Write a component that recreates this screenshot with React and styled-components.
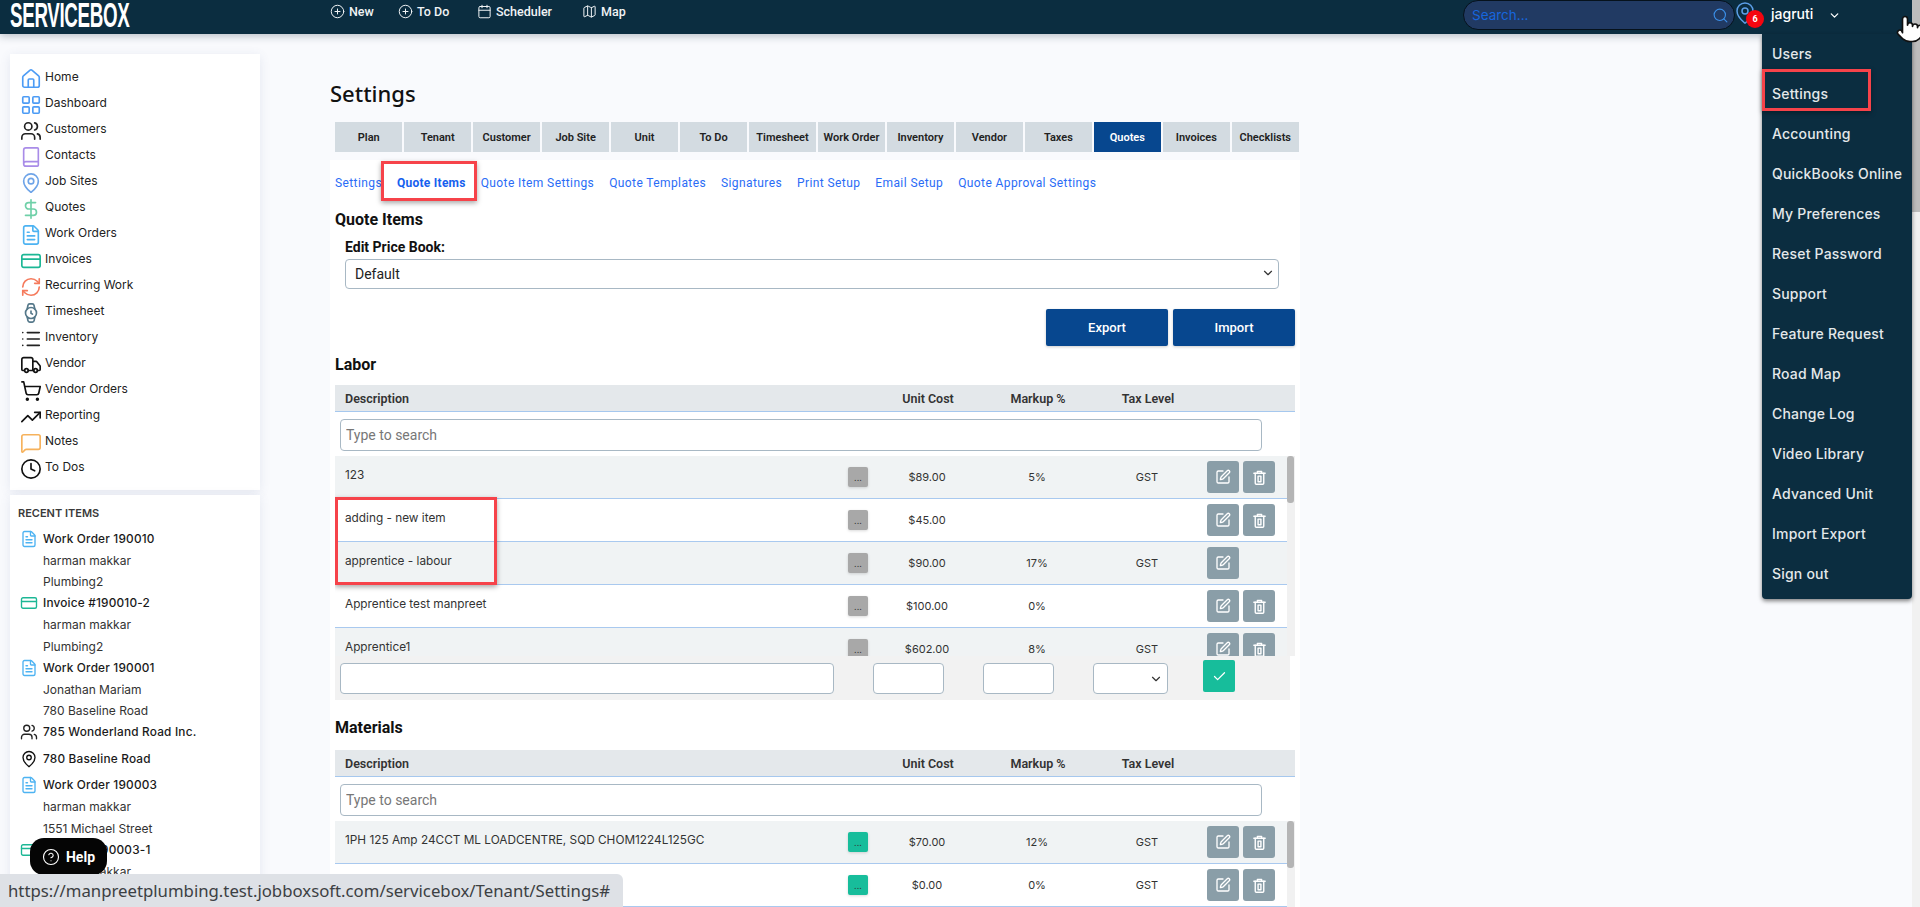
import React from 'react';
import styled, { createGlobalStyle } from 'styled-components';
import {
  Home, LayoutGrid, Users, Book, MapPin, DollarSign, FileText, CreditCard, RefreshCw, Watch,
  List, Truck, ShoppingCart, TrendingUp, MessageSquare, Clock, PlusCircle, Calendar, Map as MapIcon,
  Search, ChevronDown, Edit, Check, HelpCircle,
} from 'lucide-react';

const GlobalStyle = createGlobalStyle`
  html, body { margin: 0; padding: 0; height: 100%; overflow: hidden; background: #f9fafd; }
  * { box-sizing: border-box; }
  body { font-family: Roboto, "Liberation Sans", sans-serif; }
`;

const sideLinks = [
  ['Home', Home, '#4d9cf5'],
  ['Dashboard', LayoutGrid, '#4d9cf5'],
  ['Customers', Users, '#222'],
  ['Contacts', Book, '#a98ce8'],
  ['Job Sites', MapPin, '#6ea4e8'],
  ['Quotes', DollarSign, '#6fd0a8'],
  ['Work Orders', FileText, '#4db3f2'],
  ['Invoices', CreditCard, '#1cb795'],
  ['Recurring Work', RefreshCw, '#f57a5c'],
  ['Timesheet', Watch, '#55788a'],
  ['Inventory', List, '#222'],
  ['Vendor', Truck, '#111'],
  ['Vendor Orders', ShoppingCart, '#111'],
  ['Reporting', TrendingUp, '#111'],
  ['Notes', MessageSquare, '#f6b25c'],
  ['To Dos', Clock, '#111'],
];

const recent = [
  ['Work Order 190010', FileText, '#4db3f2', ['harman makkar', 'Plumbing2']],
  ['Invoice #190010-2', CreditCard, '#1cb795', ['harman makkar', 'Plumbing2']],
  ['Work Order 190001', FileText, '#4db3f2', ['Jonathan Mariam', '780 Baseline Road']],
  ['785 Wonderland Road Inc.', Users, '#222', []],
  ['780 Baseline Road', MapPin, '#111', []],
  ['Work Order 190003', FileText, '#4db3f2', ['harman makkar', '1551 Michael Street']],
  ['Invoice #190003-1', CreditCard, '#1cb795', ['harman makkar']],
];

const tabs = ['Plan', 'Tenant', 'Customer', 'Job Site', 'Unit', 'To Do', 'Timesheet', 'Work Order', 'Inventory', 'Vendor', 'Taxes', 'Quotes', 'Invoices', 'Checklists'];
const subLinks = ['Settings', 'Quote Items', 'Quote Item Settings', 'Quote Templates', 'Signatures', 'Print Setup', 'Email Setup', 'Quote Approval Settings'];
const menuItems = ['Users', 'Settings', 'Accounting', 'QuickBooks Online', 'My Preferences', 'Reset Password', 'Support', 'Feature Request', 'Road Map', 'Change Log', 'Video Library', 'Advanced Unit', 'Import Export', 'Sign out'];

const laborRows = [
  { name: '123', cost: '$89.00', markup: '5%', tax: 'GST', del: true },
  { name: 'adding - new item', cost: '$45.00', markup: '', tax: '', del: true },
  { name: 'apprentice - labour', cost: '$90.00', markup: '17%', tax: 'GST', del: false },
  { name: 'Apprentice test manpreet', cost: '$100.00', markup: '0%', tax: '', del: true },
  { name: 'Apprentice1', cost: '$602.00', markup: '8%', tax: 'GST', del: true },
];

const materialRows = [
  { name: '1PH 125 Amp 24CCT ML LOADCENTRE, SQD CHOM1224L125GC', cost: '$70.00', markup: '12%', tax: 'GST', del: true },
  { name: '', cost: '$0.00', markup: '0%', tax: 'GST', del: true },
];

// bin with the boxed inner panel, lucide's bins only have two lines
const BinIcon = () => (
  <svg width="17" height="17" viewBox="0 0 24 24" fill="none" stroke="currentColor" strokeWidth="2" strokeLinecap="round" strokeLinejoin="round">
    <path d="M4 6h16" />
    <path d="M9 6V3.5h6V6" />
    <path d="M6 6v14a1.5 1.5 0 0 0 1.5 1.5h9A1.5 1.5 0 0 0 18 20V6" />
    <rect x="10" y="10" width="4" height="8" />
  </svg>
);

const ItemTable = ({ rows, teal, height, children }) => (
  <>
    <TableHead>
      <HeadDesc>Description</HeadDesc>
      <NumCell>Unit Cost</NumCell>
      <NumCell>Markup %</NumCell>
      <NumCell>Tax Level</NumCell>
    </TableHead>
    <SearchRow>
      <TextField placeholder="Type to search" />
    </SearchRow>
    <RowsBox $height={height}>
      <RowsList>
        {rows.map((row, index) => (
          <Row key={index} $odd={index % 2 === 0}>
            <RowName>{row.name}</RowName>
            <DotsButton $teal={teal}>...</DotsButton>
            <ValueCell>{row.cost}</ValueCell>
            <ValueCell>{row.markup}</ValueCell>
            <ValueCell>{row.tax}</ValueCell>
            <Actions>
              <ActionButton><Edit size={16} strokeWidth={2} /></ActionButton>
              {row.del && <ActionButton><BinIcon /></ActionButton>}
            </Actions>
          </Row>
        ))}
      </RowsList>
      <RowsScroll><RowsThumb /></RowsScroll>
      {children}
    </RowsBox>
  </>
);

const App = () => (
  <>
    <GlobalStyle />
    <Page>
      <TopBar>
        <Logo><LogoText>SERVICEBOX</LogoText></Logo>
        <TopNav>
          <TopLink $width={68}><PlusCircle size={15} strokeWidth={1.6} />New</TopLink>
          <TopLink $width={79}><PlusCircle size={15} strokeWidth={1.6} />To Do</TopLink>
          <TopLink $width={105}><Calendar size={15} strokeWidth={1.6} />Scheduler</TopLink>
          <TopLink $width={60}><MapIcon size={15} strokeWidth={1.6} />Map</TopLink>
        </TopNav>
        <TopRight>
          <SearchPill>
            <SearchText>Search...</SearchText>
            <Search size={17} strokeWidth={1.6} color="#3b8fe8" />
          </SearchPill>
          <PinWrap>
            <MapPin size={24} strokeWidth={1.5} color="#5c9fe8" />
            <Badge>6</Badge>
          </PinWrap>
          <UserName>jagruti</UserName>
          <ChevronDown size={13} strokeWidth={2.4} color="#fff" />
        </TopRight>
      </TopBar>
      <Body>
        <Sidebar>
          <SideCard>
            {sideLinks.map(([label, Icon, color]) => (
              <SideLink key={label}>
                <Icon size={22} strokeWidth={1.8} color={color} />
                <span>{label}</span>
              </SideLink>
            ))}
          </SideCard>
          <RecentCard>
            <RecentTitle>RECENT ITEMS</RecentTitle>
            {recent.map(([label, Icon, color, subs]) => (
              <RecentGroup key={label} $spaced={subs.length === 0}>
                <RecentHead>
                  <IconSlot><Icon size={18} strokeWidth={1.8} color={color} /></IconSlot>
                  {label}
                </RecentHead>
                {subs.map((sub, i) => <RecentSub key={i}>{sub}</RecentSub>)}
              </RecentGroup>
            ))}
          </RecentCard>
        </Sidebar>
        <Content>
          <PageTitle>Settings</PageTitle>
          <Tabs>
            {tabs.map((tab) => <Tab key={tab} $active={tab === 'Quotes'}>{tab}</Tab>)}
          </Tabs>
          <Panel>
            <SubNav>
              {subLinks.map((link) => <SubLink key={link} $active={link === 'Quote Items'}>{link}</SubLink>)}
              <QuoteItemsMark />
            </SubNav>
            <SectionTitle>Quote Items</SectionTitle>
            <PriceBook>
              <FieldLabel>Edit Price Book:</FieldLabel>
              <SelectBox>
                Default
                <ChevronDown size={14} strokeWidth={2} color="#333" />
              </SelectBox>
            </PriceBook>
            <ButtonRow>
              <BlueButton>Export</BlueButton>
              <BlueButton>Import</BlueButton>
            </ButtonRow>
            <LaborTitle>Labor</LaborTitle>
            <ItemTable rows={laborRows} height={200}>
              <RowsMark />
            </ItemTable>
            <AddRow>
              <AddInput $width={494} />
              <AddInput $width={71} />
              <AddInput $width={71} />
              <AddSelect><ChevronDown size={14} strokeWidth={2} color="#333" /></AddSelect>
              <CheckButton><Check size={15} strokeWidth={2} /></CheckButton>
            </AddRow>
            <MaterialsTitle>Materials</MaterialsTitle>
            <ItemTable rows={materialRows} teal height={90} />
          </Panel>
        </Content>
      </Body>
      <PageScroll><PageThumb /></PageScroll>
      <UserMenu>
        {menuItems.map((item) => <MenuRow key={item}>{item}</MenuRow>)}
        <SettingsMark />
      </UserMenu>
      <Cursor viewBox="0 0 24 24" width="30" height="30">
        <path
          d="M8 2a2 2 0 0 1 2 2v5a2 2 0 0 1 4 0v1a2 2 0 0 1 4 0v1a2 2 0 0 1 4 0v3a8 8 0 0 1-8 8h-2c-2.8 0-4.5-.9-6-2.3l-3.6-3.6a2 2 0 0 1 2.8-2.8L6 15V4a2 2 0 0 1 2-2z"
          fill="#fff"
          stroke="#111"
          strokeWidth="1.3"
          strokeLinejoin="round"
        />
      </Cursor>
      <HelpButton><HelpCircle size={18} strokeWidth={1.5} />Help</HelpButton>
      <UrlBubble>https://manpreetplumbing.test.jobboxsoft.com/servicebox/Tenant/Settings#</UrlBubble>
    </Page>
  </>
);

export default App;

const Page = styled.div`
  position: relative;
  height: 907px;
  overflow: hidden;
  background: #f9fafd;
`;

const TopBar = styled.header`
  position: relative;
  z-index: 2;
  height: 34px;
  display: flex;
  align-items: flex-start;
  background: #0b2d40;
  box-shadow: 0 2px 8px rgba(30, 50, 70, 0.3);
  color: #fff;
`;

const Logo = styled.div`
  width: 330px;
  height: 34px;
  padding-left: 10px;
`;

const LogoText = styled.span`
  display: inline-block;
  font-family: "Liberation Sans", sans-serif;
  font-size: 35px;
  line-height: 29px;
  font-weight: 700;
  letter-spacing: -0.6px;
  transform: scaleX(0.536);
  transform-origin: left center;
`;

const TopNav = styled.nav`
  display: flex;
  height: 22px;
  align-items: center;
`;

const TopLink = styled.a`
  display: flex;
  align-items: center;
  gap: 4px;
  width: ${(p) => p.$width}px;
  font-size: 12.5px;
  font-weight: 500;
  color: #f0f3f5;
`;

const TopRight = styled.div`
  display: flex;
  align-items: center;
  position: absolute;
  left: 1463px;
  top: 0;
  height: 30px;
`;

const SearchPill = styled.div`
  width: 272px;
  height: 30px;
  display: flex;
  align-items: center;
  justify-content: space-between;
  padding: 0 5px 0 8px;
  background: #213a63;
  border: 1px solid #06121c;
  border-radius: 15px;
`;

const SearchText = styled.span`
  font-family: Inter, sans-serif;
  font-size: 13.5px;
  color: #1766dd;
`;

const PinWrap = styled.div`
  position: relative;
  width: 36px;
  height: 30px;
  padding-top: 1px;
  svg { margin-left: -2px; }
`;

const Badge = styled.span`
  position: absolute;
  left: 11px;
  top: 10px;
  width: 18px;
  height: 18px;
  border-radius: 50%;
  background: #f5050f;
  color: #fff;
  font-size: 9px;
  font-weight: 700;
  display: flex;
  align-items: center;
  justify-content: center;
`;

const UserName = styled.span`
  width: 57px;
  font-family: Inter, sans-serif;
  font-size: 14px;
  font-weight: 500;
  margin-top: -3px;
`;

const Body = styled.div`
  height: 873px;
  display: flex;
  align-items: flex-start;
`;

const Sidebar = styled.aside`
  width: 250px;
  margin: 20px 0 0 10px;
  flex: none;
  display: flex;
  flex-direction: column;
  gap: 5px;
`;

const SideCard = styled.div`
  height: 436px;
  padding: 10px 0 0 10px;
  background: #fff;
  box-shadow: 0 2px 10px rgba(80, 100, 150, 0.12);
`;

const SideLink = styled.a`
  height: 26px;
  display: flex;
  align-items: flex-start;
  gap: 3px;
  font-family: Inter, sans-serif;
  font-size: 12px;
  line-height: 26px;
  color: #222;
  svg { margin-top: 4px; flex: none; }
`;

const RecentCard = styled(SideCard)`
  height: 420px;
  padding: 10px 8px 0 8px;
`;

const RecentTitle = styled.div`
  height: 23px;
  font-family: Inter, sans-serif;
  font-size: 11px;
  line-height: 16px;
  font-weight: 600;
  color: #3a3a3a;
`;

const RecentGroup = styled.div`
  margin-bottom: ${(p) => (p.$spaced ? '5px' : '0')};
`;

const RecentHead = styled.div`
  height: 21.5px;
  display: flex;
  align-items: center;
  font-family: Inter, sans-serif;
  font-size: 11.8px;
  font-weight: 500;
  letter-spacing: 0.2px;
  color: #1a1a1a;
`;

const IconSlot = styled.span`
  width: 25px;
  flex: none;
  display: flex;
  justify-content: center;
  padding-right: 4px;
`;

const RecentSub = styled.div`
  height: 21.5px;
  padding-left: 25px;
  font-family: Inter, sans-serif;
  font-size: 12px;
  line-height: 22.5px;
  color: #333;
`;

const Content = styled.main`
  width: 970px;
  margin-left: 70px;
  flex: none;
`;

const PageTitle = styled.h1`
  height: 71px;
  margin: 0;
  padding-top: 46px;
  font-family: "Noto Sans", sans-serif;
  font-size: 22px;
  line-height: 26px;
  font-weight: 500;
  color: #111;
`;

const Tabs = styled.div`
  display: grid;
  grid-template-columns: repeat(14, 1fr);
  gap: 1.5px;
  width: 964px;
  height: 30px;
  margin: 17px 0 8px 5px;
`;

const Tab = styled.div`
  display: flex;
  align-items: center;
  justify-content: center;
  background: ${(p) => (p.$active ? '#07478f' : '#d3dbe1')};
  color: ${(p) => (p.$active ? '#fff' : '#222')};
  font-size: 11px;
  font-weight: 600;
  white-space: nowrap;
`;

const Panel = styled.section`
  height: 760px;
  padding: 0 5px;
  background: #fff;
`;

const SubNav = styled.nav`
  position: relative;
  height: 46px;
  display: flex;
  align-items: center;
  gap: 15px;
`;

const SubLink = styled.a`
  font-size: 12px;
  letter-spacing: ${(p) => (p.$active ? '0.25px' : '0.4px')};
  font-weight: ${(p) => (p.$active ? 700 : 400)};
  color: ${(p) => (p.$active ? '#1560ee' : '#2a6cf6')};
`;

const RedMark = styled.div`
  position: absolute;
  border: 3px solid #f6434a;
  box-shadow: 0 2px 5px rgba(0, 0, 0, 0.35);
  pointer-events: none;
`;

const QuoteItemsMark = styled(RedMark)`
  left: 46px;
  top: 1px;
  width: 96px;
  height: 40px;
`;

const SectionTitle = styled.h2`
  margin: 0;
  height: 26px;
  font-size: 16px;
  line-height: 28px;
  font-weight: 700;
  color: #111;
`;

const PriceBook = styled.div`
  padding: 0 16px 0 10px;
`;

const FieldLabel = styled.div`
  height: 27px;
  font-size: 14px;
  line-height: 31px;
  font-weight: 700;
  color: #111;
`;

const SelectBox = styled.div`
  height: 30px;
  display: flex;
  align-items: center;
  justify-content: space-between;
  padding: 0 3px 0 9px;
  border: 1px solid #a8b8c4;
  border-radius: 4px;
  font-size: 14px;
  color: #222;
  svg { margin-top: -2px; }
`;

const ButtonRow = styled.div`
  display: flex;
  justify-content: flex-end;
  gap: 5px;
  margin-top: 20px;
`;

const BlueButton = styled.button`
  width: 122px;
  height: 37px;
  border: 0;
  border-radius: 2px;
  background: #07478f;
  color: #fff;
  font-family: Roboto, sans-serif;
  font-size: 13px;
  font-weight: 500;
  box-shadow: 0 1px 3px rgba(0, 0, 0, 0.2);
`;

const LaborTitle = styled(SectionTitle)`
  margin-top: 5px;
  height: 34px;
  line-height: 28px;
`;

const TableHead = styled.div`
  display: flex;
  align-items: center;
  height: 27px;
  padding-right: 92px;
  background: #e4e8eb;
  border-bottom: 1px solid #a6c8ee;
  font-size: 12.5px;
  font-weight: 600;
  color: #333;
`;

const HeadDesc = styled.div`
  flex: 1;
  padding-left: 10px;
`;

const NumCell = styled.div`
  width: 110px;
  text-align: center;
`;

const SearchRow = styled.div`
  height: 44px;
  padding: 7px 33px 0 5px;
`;

const TextField = styled.input`
  width: 100%;
  height: 32px;
  padding: 0 5px;
  border: 1px solid #a8b8c4;
  border-radius: 4px;
  font-family: Roboto, sans-serif;
  font-size: 14px;
  outline: none;
  &::placeholder { color: #777; }
`;

const RowsBox = styled.div`
  position: relative;
  display: flex;
  height: ${(p) => p.$height}px;
  overflow: hidden;
`;

const RowsList = styled.div`
  flex: 1;
  min-width: 0;
`;

const Row = styled.div`
  height: 43px;
  display: flex;
  align-items: center;
  background: ${(p) => (p.$odd ? '#f0f3f4' : '#fff')};
  border-bottom: 1px solid #a9c9ef;
`;

const RowName = styled.div`
  width: 513px;
  padding: 0 0 5px 10px;
  font-family: Inter, sans-serif;
  font-size: 11.8px;
  color: #333;
`;

const DotsButton = styled.div`
  width: 20px;
  height: 20px;
  border-radius: 2px;
  background: ${(p) => (p.$teal ? '#17bd9b' : '#a8a8a8')};
  color: #333;
  font-size: 10px;
  line-height: 22px;
  text-align: center;
  box-shadow: 0 1px 3px rgba(0, 0, 0, 0.15);
`;

const ValueCell = styled.div`
  width: 110px;
  text-align: center;
  font-family: Inter, sans-serif;
  font-size: 11px;
  color: #333;
  &:nth-child(3) { margin-left: 4px; }
`;

const Actions = styled.div`
  display: flex;
  gap: 4px;
  margin-left: 5px;
`;

const ActionButton = styled.div`
  width: 32px;
  height: 32px;
  display: flex;
  align-items: center;
  justify-content: center;
  background: #8a9ea8;
  color: #fff;
  border-radius: 3px;
`;

const RowsScroll = styled.div`
  width: 8px;
  flex: none;
  background: #f1f1f1;
`;

const RowsThumb = styled.div`
  width: 7px;
  height: 47px;
  background: #b5b5b5;
  border-radius: 3px;
`;

const RowsMark = styled(RedMark)`
  left: 0;
  top: 41px;
  width: 162px;
  height: 88px;
`;

const AddRow = styled.div`
  display: flex;
  align-items: center;
  width: 955px;
  height: 44px;
  padding: 1px 0 0 5px;
  background: #f2f2f2;
`;

const AddInput = styled.div`
  width: ${(p) => p.$width}px;
  height: 31px;
  margin-right: 39px;
  background: #fff;
  border: 1px solid #a8b8c4;
  border-radius: 4px;
`;

const AddSelect = styled(AddInput)`
  width: 75px;
  margin-right: 35px;
  display: flex;
  align-items: center;
  justify-content: flex-end;
  padding-right: 4px;
`;

const CheckButton = styled.div`
  width: 32px;
  height: 32px;
  margin-top: -5px;
  display: flex;
  align-items: center;
  justify-content: center;
  background: #17bd9b;
  color: #fff;
  border-radius: 2px;
`;

const MaterialsTitle = styled(SectionTitle)`
  height: 50px;
  line-height: 56px;
`;

const PageScroll = styled.div`
  position: absolute;
  right: 0;
  top: 0;
  z-index: 3;
  width: 8px;
  height: 907px;
  background: #f1f1f1;
`;

const PageThumb = styled.div`
  height: 212px;
  background: #bdbdbd;
`;

const UserMenu = styled.div`
  position: absolute;
  z-index: 3;
  left: 1762px;
  top: 34px;
  width: 150px;
  height: 565px;
  background: #0b2d40;
  border-radius: 0 0 4px 4px;
  box-shadow: 0 2px 4px rgba(0, 0, 0, 0.5);
`;

const MenuRow = styled.div`
  height: 40px;
  padding-left: 10px;
  font-family: Inter, sans-serif;
  font-size: 14px;
  letter-spacing: 0.2px;
  line-height: 40px;
  font-weight: 500;
  color: #e4e8ea;
  white-space: nowrap;
`;

const SettingsMark = styled(RedMark)`
  left: 0;
  top: 35px;
  width: 109px;
  height: 42px;
`;

const Cursor = styled.svg`
  position: absolute;
  z-index: 4;
  left: 1895px;
  top: 14px;
`;

const HelpButton = styled.div`
  position: absolute;
  z-index: 4;
  left: 30px;
  top: 838px;
  width: 77px;
  height: 37px;
  display: flex;
  align-items: center;
  justify-content: center;
  gap: 6px;
  background: #050505;
  border-radius: 14px;
  color: #fff;
  font-size: 14px;
  font-weight: 700;
`;

const UrlBubble = styled.div`
  position: absolute;
  z-index: 5;
  left: 0;
  top: 874px;
  width: 623px;
  height: 33px;
  padding-left: 8px;
  background: #dee1e6;
  border-radius: 0 6px 0 0;
  font-family: "Noto Sans", "Open Sans", sans-serif;
  font-size: 16.75px;
  line-height: 34px;
  color: #3c4043;
  white-space: nowrap;
`;
